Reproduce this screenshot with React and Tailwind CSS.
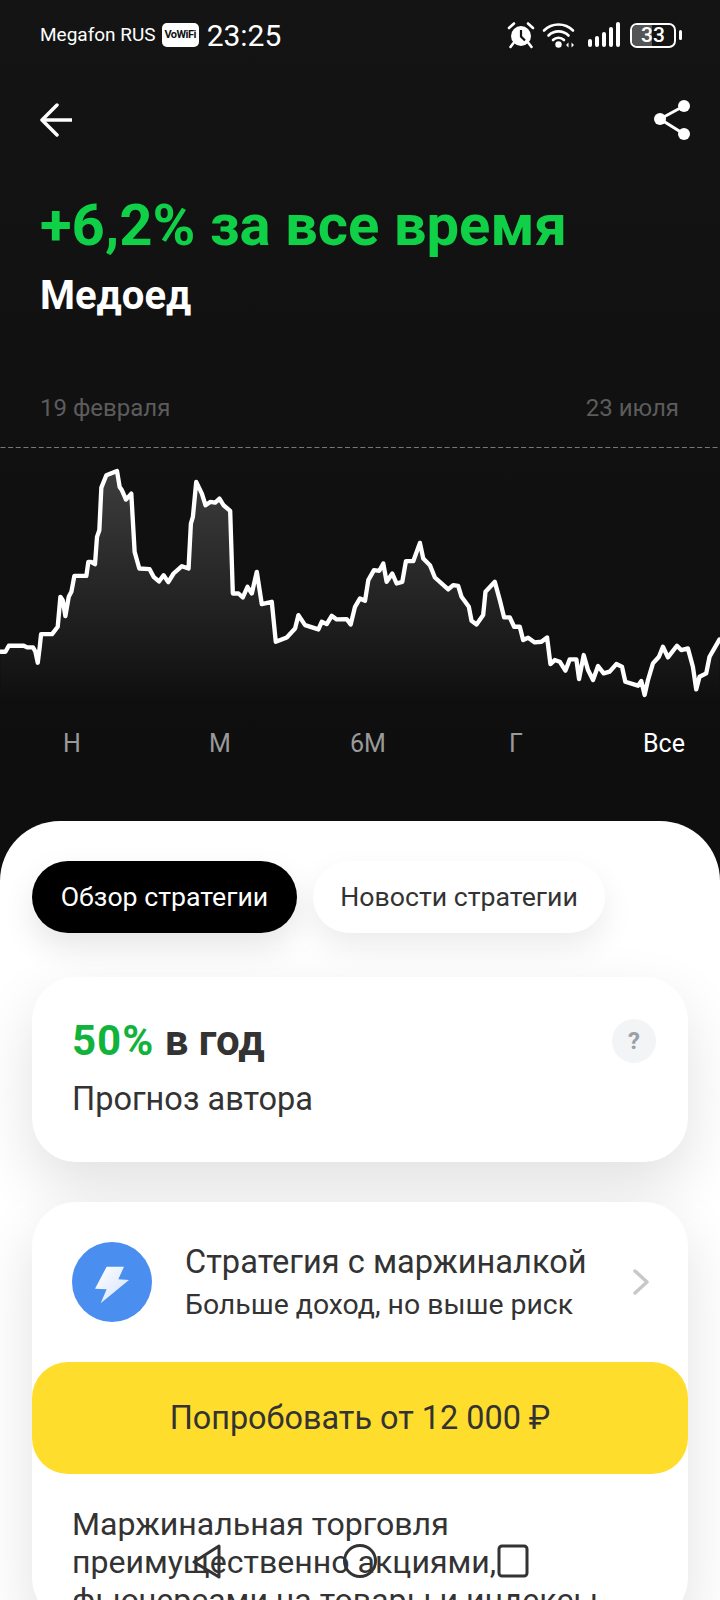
import React from 'react';

// chart points are read off the reference at 3x, the right half starts at x=1080
const leftPts = [[0,815],[15,815],[25,797],[70,797],[80,802],[98,802],[105,815],[112,848],[118,800],[122,762],[155,762],[172,740],[180,650],[187,660],[195,708],[205,650],[213,635],[222,587],[258,587],[264,545],[272,545],[284,552],[290,470],[297,450],[303,322],[318,285],[350,272],[358,320],[365,330],[377,358],[393,340],[403,515],[417,565],[448,567],[460,590],[476,604],[490,585],[504,606],[520,580],[545,558],[565,565],[572,430],[578,410],[588,305],[605,340],[616,375],[630,365],[645,367],[658,355],[670,375],[690,392],[698,640],[715,640],[728,652],[742,620],[755,640],[770,575],[785,672],[815,665],[827,785],[860,772],[885,745],[895,705],[915,735],[955,748],[965,725],[980,732],[995,707],[1010,718],[1040,717],[1052,733],[1065,680]];
const rightPts = [[0,655],[15,662],[25,600],[42,570],[58,572],[70,550],[80,605],[97,580],[110,610],[127,605],[138,543],[160,543],[180,488],[190,535],[210,555],[225,592],[265,628],[280,615],[295,617],[305,650],[327,680],[335,722],[350,733],[370,705],[377,635],[405,605],[420,660],[433,712],[450,712],[463,740],[480,740],[490,780],[505,773],[525,787],[545,785],[562,772],[572,852],[585,840],[600,845],[617,872],[630,838],[650,838],[658,897],[672,825],[685,870],[700,900],[715,858],[732,880],[750,875],[770,852],[787,860],[797,905],[835,917],[845,903],[855,945],[865,900],[880,850],[898,830],[910,800],[925,832],[952,797],[965,810],[985,805],[1000,860],[1010,928],[1020,890],[1040,880],[1050,830],[1080,778]];
const pts = [...leftPts, ...rightPts.map(([x, y]) => [x + 1080, y])];
const line = pts.map(([x, y]) => `${x},${y}`).join(' ');
const area = `0,960 ${line} 2160,960`;

function Chart() {
  return (
    <svg viewBox="0 200 2160 760" className="block w-[720px] h-[253px]">
      <defs>
        <linearGradient id="chartFill" x1="0" y1="270" x2="0" y2="960" gradientUnits="userSpaceOnUse">
          <stop offset="0" stopColor="#3d3d3d" />
          <stop offset="1" stopColor="#0f0f10" />
        </linearGradient>
      </defs>
      <polygon points={area} fill="url(#chartFill)" />
      <line x1="0" y1="201" x2="2160" y2="201" stroke="#777" strokeWidth="4" strokeDasharray="15 8" />
      <polyline points={line} fill="none" stroke="#fff" strokeWidth="13" strokeLinejoin="round" strokeLinecap="round" />
    </svg>
  );
}

function StatusIcons() {
  return (
    <div className="flex items-center">
      <svg viewBox="0 0 28 28" className="w-[28px] h-[28px]" fill="none">
        <circle cx="14" cy="15" r="10" fill="#fff" />
        <path d="M14 9v6.5l4 4" stroke="#111" strokeWidth="2.2" />
        <path d="M2 7l5-4.5M26 7l-5-4.5M6.5 22l-3 4M21.5 22l3 4" stroke="#fff" strokeWidth="2.6" strokeLinecap="round" />
      </svg>
      <svg viewBox="0 0 34 28" className="w-[34px] h-[28px] ml-[7px]" fill="none">
        <path d="M2 9.5C10 1.5 23 1.5 31 9.5M6.5 14.5C12 9 21 9 26.5 14.5M11 19c3-3 8-3 11 0" stroke="#fff" strokeWidth="2.6" strokeLinecap="round" />
        <circle cx="16.5" cy="23.5" r="3.2" fill="#fff" />
        <path d="M24 24l2.5-2.5v5zM32 24l-2.5-2.5v5z" fill="#fff" />
      </svg>
      <svg viewBox="0 0 32 26" className="w-[32px] h-[26px] ml-[12px]" fill="#fff">
        <rect x="0" y="17" width="4" height="8" rx="2" />
        <rect x="7" y="14" width="4" height="11" rx="2" />
        <rect x="14" y="10" width="4" height="15" rx="2" />
        <rect x="21" y="5" width="4" height="20" rx="2" />
        <rect x="28" y="0" width="4" height="25" rx="2" />
      </svg>
      <div className="relative ml-[10px] w-[46px] h-[25px] rounded-[7px] border-2 border-white overflow-hidden flex items-center justify-center">
        <span className="absolute left-0 top-0 bottom-0 w-[20px] bg-[#555]" />
        <span className="relative text-white text-[21px] leading-none font-medium">33</span>
      </div>
      <span className="ml-[3px] w-[3px] h-[10px] rounded-full bg-white" />
    </div>
  );
}

function Tabs() {
  return (
    <div className="flex gap-4 px-8">
      <div className="h-[72px] w-[265px] rounded-full bg-black text-white text-[26.7px] flex items-center justify-center shadow-[0_14px_32px_rgba(0,0,0,0.1)]">Обзор стратегии</div>
      <div className="h-[72px] w-[292px] rounded-full bg-white text-[#333] text-[26.7px] flex items-center justify-center shadow-[0_14px_32px_rgba(0,0,0,0.08)]">Новости стратегии</div>
    </div>
  );
}

export default function App() {
  const periods = [['Н', 'text-[#9a9a9a]'], ['М', 'text-[#9a9a9a]'], ['6М', 'text-[#9a9a9a]'], ['Г', 'text-[#9a9a9a]'], ['Все', 'text-white']];

  return (
    <div className="relative h-[1600px] w-[720px] overflow-hidden bg-linear-to-b from-[#141414] via-[#0e0e0f] to-[#101010] font-['Roboto',sans-serif]">
      <div className="flex h-[70px] items-center justify-between pl-10 pr-[38px]">
        <div className="flex items-center text-white">
          <span className="text-[19px]">Megafon RUS</span>
          <span className="ml-[6px] h-[24px] w-[37px] rounded-[5px] bg-white text-[#111] text-[11px] font-bold leading-[24px] text-center tracking-tighter">VoWiFi</span>
          <span className="ml-[8px] text-[30px]">23:25</span>
        </div>
        <StatusIcons />
      </div>

      <div className="flex items-center justify-between pl-10 pr-[30px] h-[60px] mt-[20px]">
        <svg viewBox="0 0 34 34" className="w-[34px] h-[34px]" fill="none" stroke="#fff" strokeWidth="3.5" strokeLinejoin="round">
          <path d="M32 17H2" />
          <path d="M17 2L2 17l15 15" strokeLinecap="round" />
        </svg>
        <svg viewBox="0 0 38 42" className="w-[38px] h-[42px]" fill="#fff">
          <path d="M32 7L8 20l24 15" fill="none" stroke="#fff" strokeWidth="3" />
          <circle cx="32" cy="7" r="6" />
          <circle cx="8" cy="20" r="6" />
          <circle cx="32" cy="35" r="6" />
        </svg>
      </div>

      <div className="pl-10 mt-[45px] text-[#10d048] text-[58px] font-bold leading-[60px]">+6,2% за все время</div>
      <div className="pl-10 mt-[19px] text-white text-[40px] font-bold leading-[44px]">Медоед</div>

      <div className="flex justify-between pl-10 pr-[41px] mt-[74px] text-[#5c5c5c] text-[24px] leading-[32px]">
        <span>19 февраля</span>
        <span>23 июля</span>
      </div>
      <div className="mt-[23px]">
        <Chart />
      </div>
      <div className="grid grid-cols-[repeat(5,148px)] ml-[-2px] mt-[28px] text-[25px] leading-[32px] text-center">
        {periods.map(([label, color]) => (
          <span key={label} className={color}>{label}</span>
        ))}
      </div>

      <div className="absolute left-0 right-0 top-[821px] bottom-0 rounded-t-[60px] bg-white pt-[40px]">
        <Tabs />

        <div className="mx-8 mt-[44px] h-[185px] rounded-[44px] bg-white shadow-[0_24px_60px_rgba(0,0,0,0.12)] pl-10 pr-8 pt-[38px] flex justify-between">
          <div>
            <div className="text-[42px] font-bold leading-[52px] text-[#333]">
              <span className="text-[#12b33c] tracking-[1px]">50%</span> в год
            </div>
            <div className="mt-[12px] text-[32.5px] leading-[40px] text-[#333]">Прогноз автора</div>
          </div>
          <div className="mt-[4px] h-[44px] w-[44px] rounded-full bg-[#f2f4f5] text-[#9aa0a6] text-[24px] font-bold flex items-center justify-center">?</div>
        </div>

        <div className="mx-8 mt-[40px] h-[420px] rounded-[44px] bg-white shadow-[0_24px_60px_rgba(0,0,0,0.12)] pl-10 pr-[39px] pt-[40px]">
          <div className="flex items-center">
            <div className="h-[80px] w-[80px] rounded-full bg-[#4a8ff0] flex items-center justify-center">
              <svg viewBox="0 0 102 114" className="w-[34px] h-[38px] mt-[6px]">
                <defs>
                  <linearGradient id="bolt" x1="0" y1="0" x2="1" y2="1">
                    <stop offset="0" stopColor="#fff" />
                    <stop offset="1" stopColor="#d3e2fa" />
                  </linearGradient>
                </defs>
                <path d="M35 2L87 2L70 40L102 42L17 112L35 70L0 68Z" fill="url(#bolt)" />
              </svg>
            </div>
            <div className="ml-[33px] flex-1">
              <div className="text-[32.6px] leading-[40px] text-[#333]">Стратегия с маржиналкой</div>
              <div className="mt-[6px] text-[28.4px] leading-[34px] text-[#333]">Больше доход, но выше риск</div>
            </div>
            <svg viewBox="0 0 16 26" className="w-[16px] h-[26px]" fill="none" stroke="#c8c8c8" strokeWidth="3.5" strokeLinecap="round" strokeLinejoin="round">
              <path d="M2 2l12 11L2 24" />
            </svg>
          </div>
          <div className="mt-[183px] text-[32.1px] leading-[38px] text-[#333] whitespace-nowrap">
            Маржинальная торговля<br />преимущественно акциями,<br />фьючерсами на товары и индексы
          </div>
        </div>
      </div>

      <div className="absolute left-8 right-8 top-[1362px] h-[112px] rounded-[36px] bg-[#ffdd2d] text-[#333] text-[32.4px] flex items-center justify-center">
        Попробовать от 12 000 ₽
      </div>

      <svg viewBox="0 0 720 40" className="absolute left-0 top-[1541px] w-[720px] h-[40px]" fill="none" stroke="#333" strokeWidth="3" strokeLinejoin="round">
        <path d="M219 5v31L194 21z" />
        <circle cx="360" cy="20" r="15.5" />
        <rect x="499" y="5" width="28" height="30" rx="3" />
      </svg>
    </div>
  );
}
